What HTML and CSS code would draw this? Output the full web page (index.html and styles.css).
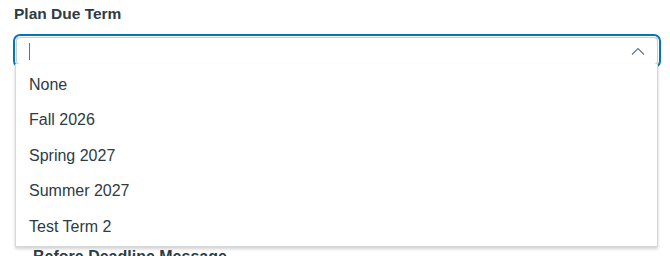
FILE: index.html
```html
<!DOCTYPE html>
<html>
<head>
<meta charset="utf-8">
<link rel="stylesheet" href="styles.css">
</head>
<body>
<div class="page">
  <div class="field">
    <label class="label">Plan Due Term</label>
    <div class="select">
      <div class="input">
        <span class="caret"></span>
        <svg class="chev" width="14" height="8" viewBox="0 0 14 8"><path d="M1 7.5 L7 1.5 L13 7.5" fill="none" stroke="#6b7780" stroke-width="1.2"/></svg>
      </div>
      <ul class="menu">
        <li>None</li>
        <li>Fall 2026</li>
        <li>Spring 2027</li>
        <li>Summer 2027</li>
        <li>Test Term 2</li>
      </ul>
    </div>
  </div>
  <div class="next">Before Deadline Message</div>
</div>
</body>
</html>
```
FILE: styles.css
```css
* { box-sizing: border-box; }
html, body { margin: 0; padding: 0; background: #fff; }
body { font-family: "Liberation Sans", Arial, sans-serif; color: #2d3b45; }
.page { padding: 5px 10px 0 14px; }
.label { display: block; font-size: 15.5px; font-weight: bold; line-height: 18px; margin-bottom: 14px; }
.select { position: relative; width: 642px; margin-left: 2px; }
.input {
  height: 28px;
  border: 1px solid #c7cdd1;
  border-radius: 4px;
  box-shadow: 0 0 0 1px #fff, 0 0 0 3px #0374b5;
  display: flex;
  align-items: center;
  padding: 0 12px 0 12px;
  justify-content: space-between;
}
.caret { width: 1px; height: 17px; background: #6f6f6f; }
.chev { display: block; margin-top: 0; }
.menu {
  position: absolute;
  left: -1px;
  right: 0;
  top: 27px;
  margin: 0;
  padding: 2.5px 0 2px;
  list-style: none;
  background: #fff;
  border: 1px solid #d5d9dc;
  border-top: none;
  box-shadow: 0 2px 3px rgba(0,0,0,0.18);
  z-index: 2;
}
.menu li { font-size: 16px; line-height: 35.5px; height: 35.5px; padding-left: 13px; }
.next { font-size: 16px; font-weight: bold; margin: 183px 0 0 19px; line-height: 18px; }
```
